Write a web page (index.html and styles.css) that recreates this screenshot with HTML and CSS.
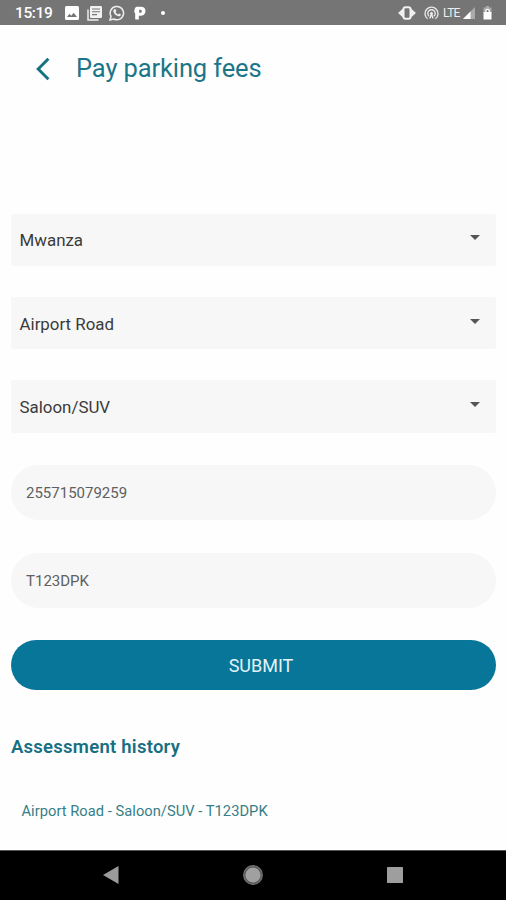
FILE: index.html
```html
<!DOCTYPE html>
<html lang="en">
<head>
<meta charset="utf-8">
<title>Pay parking fees</title>
<link rel="stylesheet" href="styles.css">
</head>
<body>
<div class="screen">
  <header class="status">
    <span class="time">15:19</span>
    <svg class="i-image" width="14" height="14" viewBox="0 0 14 14"><path fill="#fff" fill-rule="evenodd" d="M1.500 0h11A1.500 1.500 0 0 1 14 1.500v11a1.500 1.500 0 0 1-1.500 1.500h-11A1.500 1.500 0 0 1 0 12.500v-11A1.500 1.500 0 0 1 1.500 0zM2 11h10L8.700 6.800 6.200 9.700 4.500 7.800z"/></svg>
    <svg class="i-news" width="15" height="15" viewBox="0 0 15 15"><path fill="none" stroke="#eee" stroke-width="1.500" d="M1 3.500V14h10.500"/><rect x="3" y="0" width="12" height="12" rx="1.300" fill="#f2f2f2"/><path stroke="#777" stroke-width="1.100" d="M5 3h8M5 5.800h8M5 8.600h5"/></svg>
    <svg class="i-chat" width="16" height="16" viewBox="0 0 16 16"><path fill="none" stroke="#eee" stroke-width="1.500" d="M1 15l1-3.700A6.700 6.700 0 1 1 4.700 14z"/><path fill="#eee" d="M5.300 4.300l1.200-.2.900 2-.8 1c.6 1.100 1.300 1.800 2.400 2.300l1-1 1.900.9c0 1.700-1.200 2.300-2.600 2C6.800 10.700 4.700 8.600 4.300 6.300c-.1-.8.300-1.600 1-2z"/></svg>
    <svg class="i-park" width="12" height="14" viewBox="0 0 12 14"><path fill="#fff" fill-rule="evenodd" d="M2.500.8h4.100c3.200 0 4.900 1.500 4.900 4.300 0 3-2 4.700-5.100 4.700H4.800v3.700H1.200V7.300L.3 6.400C.4 3.500.8 1.500 2.500.8zM5.200 3.800v3h1c1 0 1.600-.5 1.600-1.500s-.6-1.500-1.600-1.500z"/></svg>
    <span class="dot"></span>
    <svg class="i-vibrate" width="18" height="14" viewBox="0 0 18 14"><rect x="5.500" y="1.200" width="7" height="11.600" rx="2" fill="none" stroke="#f2f2f2" stroke-width="2"/><path fill="#eee" d="M5 2.500v9L0 7zM13 2.500v9L18 7z"/></svg>
    <svg class="i-hotspot" width="15" height="14" viewBox="0 0 15 14"><g fill="none" stroke="#e8e8e8" stroke-width="1.400"><path d="M3.600 12.800a6.500 6.500 0 1 1 7.800 0"/><path d="M5.200 10.300a3.700 3.700 0 1 1 4.600 0"/></g><path fill="#eee" d="M7.500 6a1.500 1.500 0 0 1 1 2.600l1.200 3.900H8.300L7.500 10l-.8 2.500H5.300l1.200-3.900A1.500 1.500 0 0 1 7.500 6z"/></svg>
    <span class="lte">LTE</span>
    <svg class="i-signal" width="12" height="12" viewBox="0 0 12 12"><path fill="#aaa" d="M0 12L12 0v12z"/><path fill="#fff" d="M0 12l7.500-7.500V12z"/></svg>
    <svg class="i-battery" width="9" height="14" viewBox="0 0 9 14"><path fill="#aaa" d="M3 0h3v1.500h2.500V7h-8V1.500H3z"/><path fill="#fff" d="M.5 6h1.700V5a2.300 2.300 0 0 1 4.600 0v1h1.700v7.500h-8z"/><path fill="#777" d="M3.500 6V5a1 1 0 0 1 2 0v1z"/></svg>
  </header>
  <div class="toolbar">
    <svg width="14" height="24" viewBox="0 0 14 24"><path fill="none" stroke="#14717f" stroke-width="2.900" d="M12.400 1.800L2.200 12l10.200 10.200"/></svg>
    <h1>Pay parking fees</h1>
  </div>
  <main>
    <div class="select"><span>Mwanza</span><i></i></div>
    <div class="select second"><span>Airport Road</span><i></i></div>
    <div class="select third"><span>Saloon/SUV</span><i></i></div>
    <div class="field phone"><span>255715079259</span></div>
    <div class="field plate"><span>T123DPK</span></div>
    <button type="button">SUBMIT</button>
    <h2>Assessment history</h2>
    <p>Airport Road - Saloon/SUV - T123DPK</p>
  </main>
  <nav>
    <svg width="16" height="18" viewBox="0 0 16 18"><path fill="#9b9b9b" d="M0 9L15.500 0v18z"/></svg>
    <svg width="22" height="22" viewBox="0 0 22 22"><circle cx="11" cy="11" r="9.300" fill="#555" stroke="#777" stroke-width="1.200"/><circle cx="11" cy="11" r="7.600" fill="#a0a0a0"/></svg>
    <svg width="16" height="16" viewBox="0 0 16 16"><rect width="16" height="16" rx=".5" fill="#9e9e9e"/></svg>
  </nav>
</div>
</body>
</html>
```
FILE: styles.css
```css
* { box-sizing: border-box; }
body { margin: 0; background: #fefefe; font-family: Roboto, "Liberation Sans", sans-serif; }
.screen { width: 506px; height: 900px; display: flex; flex-direction: column; overflow: hidden; }
svg { display: block; flex: none; }
.status { height: 25px; flex: none; background: #757575; display: flex; align-items: center; padding: 1px 14px 0 15px; color: #fff; }
.time { width: 50px; font-size: 15.500px; font-weight: 500; line-height: 20px; letter-spacing: -.4px; }
.i-news { margin-left: 8px; }
.i-chat { margin-left: 7px; }
.i-park { margin-left: 9px; }
.dot { width: 4px; height: 4px; border-radius: 50%; background: #fff; margin-left: 15px; }
.i-vibrate { margin-left: auto; }
.i-hotspot { margin-left: 8px; }
.lte { width: 20px; margin-left: 4px; font-size: 12px; line-height: 16px; letter-spacing: -.7px; color: #eee; }
.i-battery { margin-left: 8px; }
.toolbar { height: 88px; flex: none; display: flex; align-items: center; padding-left: 36px; gap: 26px; }
h1 { margin: 0; padding-bottom: 2px; color: #1c7689; font-size: 25.500px; font-weight: 400; line-height: 32px; letter-spacing: -.12px; }
main { flex: 1; display: flex; flex-direction: column; padding: 101px 10px 0 11px; }
.select { height: 52px; flex: none; margin-bottom: 31px; background: #f7f7f7; border-radius: 2px; display: flex; align-items: center; justify-content: space-between; padding: 0 16px 0 8.500px; color: #3b3b3b; font-size: 16.900px; line-height: 22px; }
.select.second { padding-top: 1px; }
.select.third { height: 53px; margin-bottom: 32px; }
.select i { border: 5px solid transparent; border-top-color: #555; border-bottom: 0; margin-bottom: 5px; }
.field { height: 55px; flex: none; background: #f7f7f7; border-radius: 28px; display: flex; align-items: center; padding: 1px 0 0 15px; color: #606060; font-size: 15px; line-height: 20px; }
.phone { margin-bottom: 33px; }
.plate { margin-bottom: 32px; }
button { height: 50px; flex: none; border: 0; border-radius: 25px; background: #087699; color: #e4f3f7; font: 400 18px/24px Roboto, "Liberation Sans", sans-serif; padding: 2px 0 0 15px; }
h2 { margin: 45px 0 0; color: #176f82; font-size: 18.500px; font-weight: 600; line-height: 24px; letter-spacing: .25px; }
p { margin: 42px 0 0 10.500px; color: #367e87; font-size: 14.700px; line-height: 20px; letter-spacing: .03px; }
nav { height: 50px; flex: none; background: #000; border-top: 1px solid #555; display: flex; align-items: center; justify-content: space-between; padding: 0 103px 1px; }
h1, h2, p, .select span, .field span { white-space: nowrap; }
```
